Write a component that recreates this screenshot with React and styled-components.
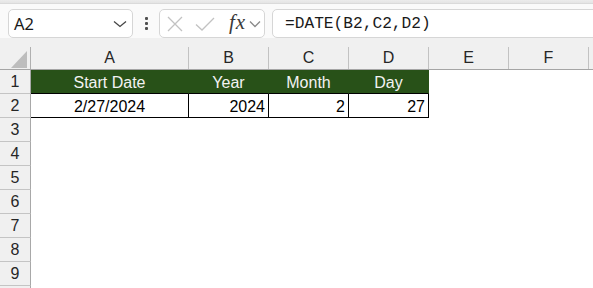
import React from "react";
import styled, { createGlobalStyle } from "styled-components";

const GlobalStyle = createGlobalStyle`
  html, body { margin: 0; padding: 0; background: #ffffff; overflow: hidden; }
  * { box-sizing: border-box; }
`;

const Page = styled.div`
  width: 593px;
  height: 288px;
  overflow: hidden;
  background: #ffffff;
  font-family: "Liberation Sans", Arial, sans-serif;
`;

const TopStrip = styled.div`
  height: 4px;
  background: linear-gradient(#ececec, #e4e4e4);
  border-bottom: 1px solid #dadada;
`;

const Toolbar = styled.div`
  display: flex;
  align-items: stretch;
  height: 34px;
  padding: 5px 0 0 8px;
  background: #fafafa;
`;

const Box = styled.div`
  height: 29px;
  flex-shrink: 0;
  background: #ffffff;
  border: 1px solid #d6d6d6;
  border-radius: 5px;
  display: flex;
  align-items: center;
`;

const NameBox = styled(Box)`
  width: 125px;
  padding: 0 0 0 5px;
  justify-content: space-between;
`;

const NameText = styled.span`
  font-family: "Noto Sans", "Liberation Sans", sans-serif;
  font-size: 16.5px;
  color: #1a1a1a;
`;

const Dots = styled.div`
  width: 26px;
  flex-shrink: 0;
  display: flex;
  flex-direction: column;
  align-items: center;
  justify-content: center;
  gap: 2px;
`;

const Dot = styled.span`
  width: 3px;
  height: 3px;
  background: #505050;
  border-radius: 1px;
`;

const FxBox = styled(Box)`
  width: 106px;
  padding-left: 7px;
`;

const Fx = styled.span`
  font-family: "Liberation Serif", "Times New Roman", serif;
  font-style: italic;
  font-size: 21px;
  color: #3a3a3a;
  letter-spacing: 1px;
  margin-left: 14px;
  margin-right: 3px;
  line-height: 1;
  padding-bottom: 3px;
`;

const FormulaBox = styled(Box)`
  flex: 1 0 auto;
  margin-left: 7px;
  margin-right: -12px;
  padding-left: 12px;
`;

const FormulaText = styled.span`
  font-family: "Liberation Mono", "Courier New", monospace;
  font-size: 16.2px;
  color: #1a1a1a;
  padding-top: 1px;
`;

const HeaderRow = styled.div`
  display: flex;
  height: 32px;
  background: #f0f0f0;
  border-bottom: 1px solid #a5a5a5;
  align-items: flex-end;
`;

const Corner = styled.div`
  width: 31px;
  flex-shrink: 0;
  height: 22px;
  border-right: 1px solid #b0b0b0;
  position: relative;
`;

const Triangle = styled.svg`
  position: absolute;
  right: 3px;
  bottom: 1px;
`;

const ColHead = styled.div`
  width: ${(p) => p.$w || 0}px;
  flex: ${(p) => (p.$fill ? "1 1 0" : "0 0 auto")};
  height: 22px;
  border-right: ${(p) => (p.$fill ? "none" : "1px solid #c2c2c2")};
  display: flex;
  align-items: center;
  justify-content: center;
  font-size: 16px;
  color: #262626;
`;

const Row = styled.div`
  display: flex;
  height: 24px;
`;

const RowHead = styled.div`
  width: 31px;
  flex-shrink: 0;
  height: 24px;
  background: #f0f0f0;
  border-right: 1px solid #a8a8a8;
  border-bottom: 1px solid #c4c4c4;
  display: flex;
  align-items: center;
  justify-content: center;
  font-size: 16px;
  color: #262626;
  padding-top: 1px;
`;

const variants = {
  head: `
    background: #285118;
    color: #f3f3f3;
    border-right: 1px solid #285118;
    border-bottom: 1px solid #000000;
  `,
  data: `
    background: #ffffff;
    color: #000000;
    border-right: 1px solid #000000;
    border-bottom: 1px solid #000000;
  `,
  empty: `
    background: #ffffff;
  `,
};

const Cell = styled.div`
  width: ${(p) => p.$w || 0}px;
  flex: ${(p) => (p.$fill ? "1 1 0" : "0 0 auto")};
  height: 24px;
  display: flex;
  align-items: center;
  justify-content: ${(p) => (p.$align === "right" ? "flex-end" : "center")};
  padding: ${(p) => (p.$fill ? "0" : "2px 3px 0 3px")};
  font-size: 16px;
  white-space: nowrap;
  ${(p) => variants[p.$variant || "empty"]}
`;

const widths = [158, 80, 80, 80, 80, 80];
const letters = ["A", "B", "C", "D", "E", "F"];

const rows = {
  1: [
    { t: "Start Date", v: "head" },
    { t: "Year", v: "head" },
    { t: "Month", v: "head" },
    { t: "Day", v: "head" },
  ],
  2: [
    { t: "2/27/2024", v: "data" },
    { t: "2024", v: "data", a: "right" },
    { t: "2", v: "data", a: "right" },
    { t: "27", v: "data", a: "right" },
  ],
};

const Chevron = ({ color = "#444", w = 12 }) => (
  <svg width={w + 2} height="8" viewBox={`0 0 ${w + 2} 8`}>
    <path d={`M1 1.5 L${(w + 2) / 2} 6.5 L${w + 1} 1.5`} fill="none" stroke={color} strokeWidth="1.3" />
  </svg>
);

export default function App() {
  return (
    <Page>
      <GlobalStyle />
      <TopStrip />
      <Toolbar>
        <NameBox>
          <NameText>A2</NameText>
          <span style={{ marginRight: 5, display: "flex" }}>
            <Chevron />
          </span>
        </NameBox>
        <Dots>
          <Dot />
          <Dot />
          <Dot />
        </Dots>
        <FxBox>
          <svg width="16" height="16" viewBox="0 0 16 16">
            <path d="M1 1 L15 15 M15 1 L1 15" stroke="#c2c2c2" strokeWidth="1.3" fill="none" />
          </svg>
          <svg width="20" height="16" viewBox="0 0 20 16" style={{ marginLeft: 12 }}>
            <path d="M1 8.5 L7 14 L19 2" stroke="#c2c2c2" strokeWidth="1.3" fill="none" />
          </svg>
          <Fx>fx</Fx>
          <Chevron color="#8a8a8a" w={10} />
        </FxBox>
        <FormulaBox>
          <FormulaText>=DATE(B2,C2,D2)</FormulaText>
        </FormulaBox>
      </Toolbar>
      <HeaderRow>
        <Corner>
          <Triangle width="16" height="17" viewBox="0 0 16 17">
            <polygon points="16,0 16,17 0,17" fill="#bdbdbd" />
          </Triangle>
        </Corner>
        {letters.map((l, i) => (
          <ColHead key={l} $w={widths[i]}>
            {l}
          </ColHead>
        ))}
        <ColHead $fill />
      </HeaderRow>
      {Array.from({ length: 10 }, (_, r) => {
        const n = r + 1;
        const data = rows[n] || [];
        return (
          <Row key={n}>
            <RowHead>{n < 10 ? n : ""}</RowHead>
            {widths.map((w, i) => {
              const c = data[i];
              return (
                <Cell key={i} $w={w} $variant={c ? c.v : "empty"} $align={c && c.a}>
                  {c ? c.t : ""}
                </Cell>
              );
            })}
            <Cell $fill />
          </Row>
        );
      })}
    </Page>
  );
}
